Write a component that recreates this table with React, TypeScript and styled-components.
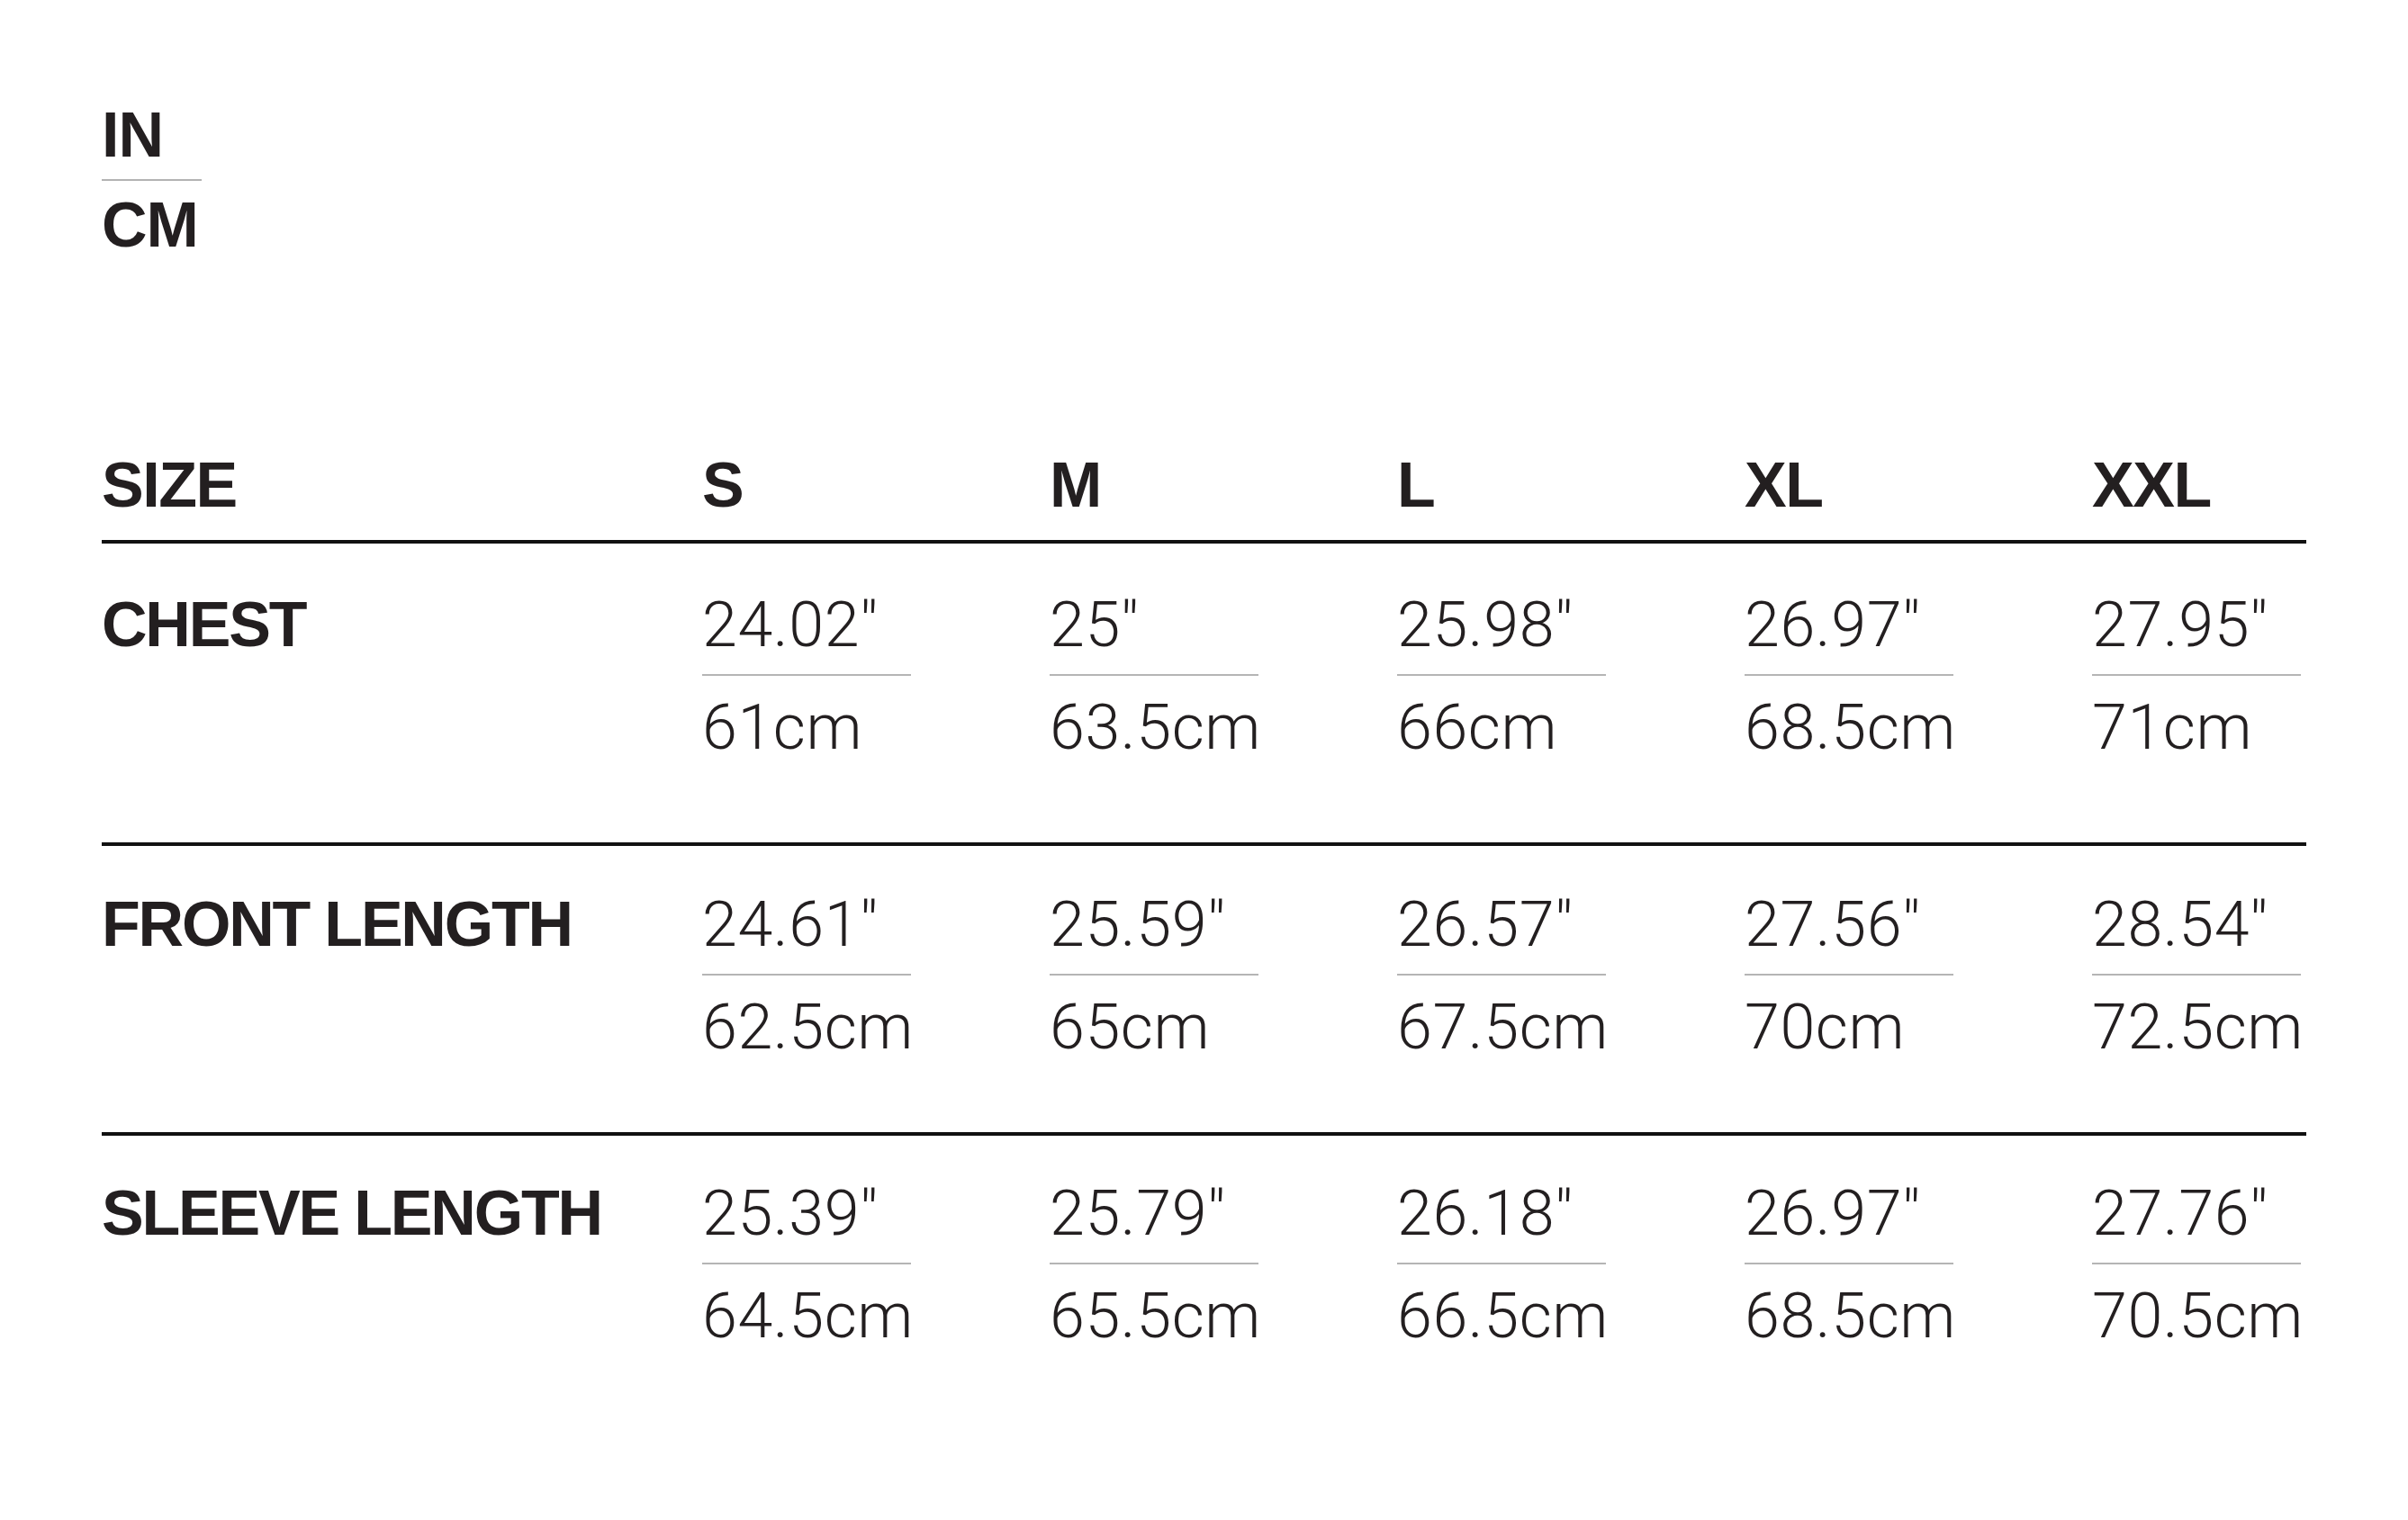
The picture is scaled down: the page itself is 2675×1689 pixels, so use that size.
import React from "react";
import styled, { createGlobalStyle } from "styled-components";

const GlobalStyle = createGlobalStyle`
  html, body {
    margin: 0;
    padding: 0;
    background: #ffffff;
  }
  body {
    font-family: "Liberation Sans", Arial, sans-serif;
    color: #231f20;
  }
`;

const Page = styled.div`
  width: 2675px;
  min-height: 1689px;
  box-sizing: border-box;
  padding: 115px 0 0 113px;
  background: #ffffff;
`;

const UnitToggle = styled.div`
  display: inline-flex;
  flex-direction: column;
  width: 111px;
`;

const UnitOption = styled.div<{ $first?: boolean }>`
  font-family: "Liberation Sans", Arial, sans-serif;
  font-weight: 700;
  font-size: 70px;
  line-height: 70px;
  letter-spacing: -1px;
  color: #231f20;
  padding-bottom: ${(p) => (p.$first ? "14px" : "0")};
  margin-top: ${(p) => (p.$first ? "0" : "14px")};
  border-bottom: ${(p) => (p.$first ? "2px solid #b3b3b3" : "none")};
`;

const Table = styled.div`
  margin-top: 219px;
  width: 2449px;
  display: flex;
  flex-direction: column;
`;

const Row = styled.div<{
  $header?: boolean;
  $padTop?: number;
  $padBottom?: number;
  $last?: boolean;
}>`
  display: grid;
  grid-template-columns: 667px repeat(4, 386px) 238px;
  align-items: start;
  padding-top: ${(p) => (p.$header ? 0 : p.$padTop ?? 55)}px;
  padding-bottom: ${(p) => (p.$header ? 26 : p.$padBottom ?? 84)}px;
  border-bottom: ${(p) => (p.$last ? "none" : "4px solid #111111")};
`;

const Label = styled.div`
  font-family: "Liberation Sans", Arial, sans-serif;
  font-weight: 700;
  font-size: 70px;
  line-height: 70px;
  letter-spacing: -2.2px;
  color: #231f20;
  white-space: nowrap;
`;

const SizeHead = styled(Label)`
  letter-spacing: -1.5px;
`;

const Cell = styled.div`
  display: flex;
  flex-direction: column;
  width: 232px;
`;

const Value = styled.div<{ $inch?: boolean }>`
  font-family: Roboto, "Liberation Sans", Arial, sans-serif;
  font-weight: 300;
  font-size: 70px;
  line-height: 70px;
  letter-spacing: 0.6px;
  color: #231f20;
  white-space: nowrap;
  padding-bottom: ${(p) => (p.$inch ? "20px" : "0")};
  margin-top: ${(p) => (p.$inch ? "0" : "22px")};
  border-bottom: ${(p) => (p.$inch ? "2px solid #b5b5b5" : "none")};
`;

const sizes = ["S", "M", "L", "XL", "XXL"];

const rows: {
  label: string;
  inch: string[];
  cm: string[];
  pt: number;
  pb: number;
}[] = [
  {
    label: "CHEST",
    inch: ["24.02", "25", "25.98", "26.97", "27.95"],
    cm: ["61", "63.5", "66", "68.5", "71"],
    pt: 55,
    pb: 93,
  },
  {
    label: "FRONT LENGTH",
    inch: ["24.61", "25.59", "26.57", "27.56", "28.54"],
    cm: ["62.5", "65", "67.5", "70", "72.5"],
    pt: 52,
    pb: 82,
  },
  {
    label: "SLEEVE LENGTH",
    inch: ["25.39", "25.79", "26.18", "26.97", "27.76"],
    cm: ["64.5", "65.5", "66.5", "68.5", "70.5"],
    pt: 51,
    pb: 84,
  },
];

export default function App() {
  return (
    <>
      <GlobalStyle />
      <Page>
        <UnitToggle>
          <UnitOption $first>IN</UnitOption>
          <UnitOption>CM</UnitOption>
        </UnitToggle>
        <Table>
          <Row $header>
            <SizeHead>SIZE</SizeHead>
            {sizes.map((s) => (
              <SizeHead key={s}>{s}</SizeHead>
            ))}
          </Row>
          {rows.map((r, i) => (
            <Row
              key={r.label}
              $padTop={r.pt}
              $padBottom={r.pb}
              $last={i === rows.length - 1}
            >
              <Label>{r.label}</Label>
              {r.inch.map((v, j) => (
                <Cell key={j}>
                  <Value $inch>{v}″</Value>
                  <Value>{r.cm[j]}cm</Value>
                </Cell>
              ))}
            </Row>
          ))}
        </Table>
      </Page>
    </>
  );
}
